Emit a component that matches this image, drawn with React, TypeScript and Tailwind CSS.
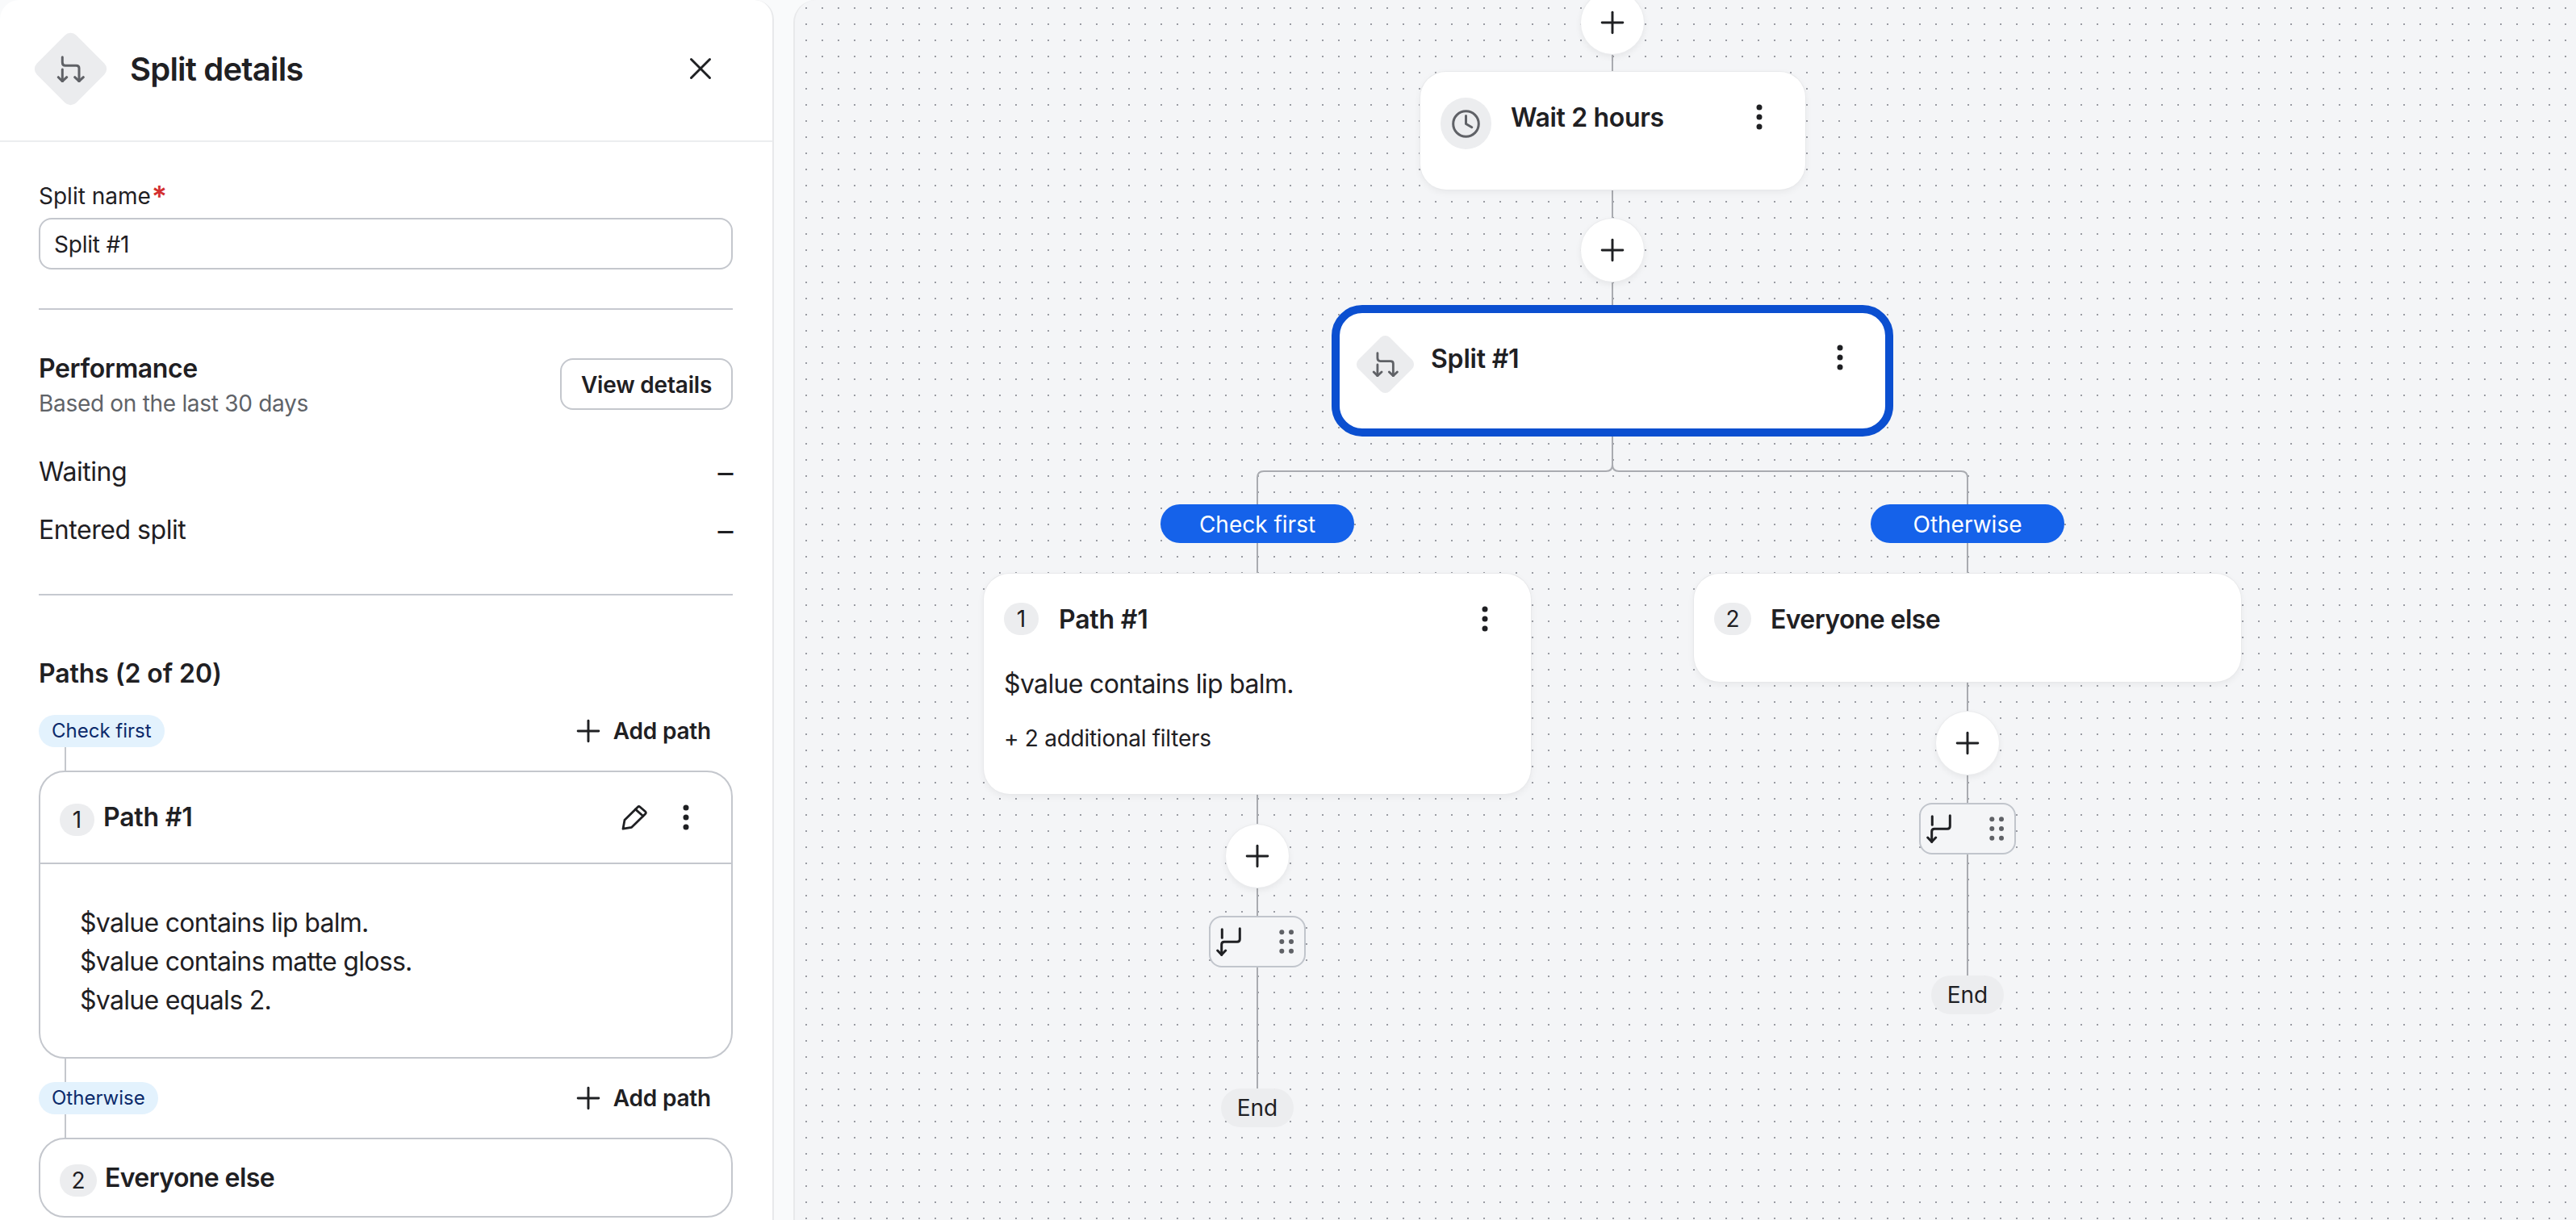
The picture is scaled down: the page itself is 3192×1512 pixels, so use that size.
import { X, Plus } from 'lucide-react';

const textFont = "font-['Inter','Liberation_Sans',sans-serif]";

function SplitIcon({ className }: { className: string }) {
  return (
    <svg className={className} viewBox="0 0 35 33" fill="none" stroke="#5f6166" strokeWidth="3" strokeLinecap="round" strokeLinejoin="round">
      <path d="M7.3 1.7V8.3Q7.3 12.3 11 12.3H24.5Q28 12.3 28 15.5V31.7" />
      <path d="M22.7 26.7L28 31.7L33.3 26.7" />
      <path d="M7.3 17V31.7" />
      <path d="M2.3 26.7L7.3 31.7L12.7 26.7" />
    </svg>
  );
}

function ReturnIcon() {
  return (
    <svg className="w-[32px] h-[37px]" viewBox="0 0 32 37" fill="none" stroke="#1f2023" strokeWidth="3" strokeLinecap="round" strokeLinejoin="round">
      <path d="M7.3 2.7V13.3" />
      <path d="M29.3 1.7V15Q29.3 18.3 26 18.3H10Q6.7 18.3 6.7 21.7V34.3" />
      <path d="M1.7 29L6.7 34.3L11.7 29" />
    </svg>
  );
}

function DragDots() {
  return (
    <svg className="w-[18px] h-[30px]" viewBox="0 0 18 30" fill="#5f6166">
      <circle cx="3.3" cy="3.3" r="3" />
      <circle cx="15" cy="3.3" r="3" />
      <circle cx="3.3" cy="15" r="3" />
      <circle cx="15" cy="15" r="3" />
      <circle cx="3.3" cy="26.7" r="3" />
      <circle cx="15" cy="26.7" r="3" />
    </svg>
  );
}

function MoreDots({ className = '' }: { className?: string }) {
  return (
    <svg className={`w-[8px] h-[32px] ${className}`} viewBox="0 0 8 32" fill="#1f2023">
      <circle cx="4" cy="4" r="3.5" />
      <circle cx="4" cy="16" r="3.5" />
      <circle cx="4" cy="28" r="3.5" />
    </svg>
  );
}

function PencilIcon() {
  return (
    <svg className="w-[32px] h-[32px]" viewBox="0 0 32 32" fill="none" stroke="#1f2023" strokeWidth="2.8" strokeLinecap="round" strokeLinejoin="round">
      <path d="M2 30.2L4 19.3L20 3.4Q21.6 1.8 23.2 3.2L29.6 8.8Q31.2 10.2 29.6 11.8L12.7 28.3Z" />
      <path d="M17.3 5.9L26.7 14.3" />
    </svg>
  );
}

function ClockIcon() {
  return (
    <svg className="w-[35px] h-[35px]" viewBox="0 0 35 35" fill="none" stroke="#5f6166" strokeWidth="3" strokeLinecap="round" strokeLinejoin="round">
      <circle cx="17.5" cy="17.5" r="15.8" />
      <path d="M17.5 7.5V17.5L24.8 21.8" />
    </svg>
  );
}

function AddButton({ className }: { className: string }) {
  return (
    <div className={`absolute flex h-[78px] w-[78px] items-center justify-center rounded-full bg-white shadow-[0_0_0_1px_#ebecee,0_3px_8px_rgba(0,0,0,0.07)] ${className}`}>
      <Plus className="h-[44px] w-[44px] text-[#1f2023]" strokeWidth={1.6} />
    </div>
  );
}

function Handle({ className }: { className: string }) {
  return (
    <div className={`absolute flex h-[64px] w-[120px] items-center justify-between rounded-[16px] border-2 border-[#c1c5cc] bg-[#f4f5f7] pl-[7px] pr-[13px] ${className}`}>
      <ReturnIcon />
      <DragDots />
    </div>
  );
}

function EndPill({ className }: { className: string }) {
  return (
    <div className={`absolute flex h-[48px] w-[90px] items-center justify-center rounded-full bg-[#ecedef] text-[28px] text-[#1f2023] ${className}`}>
      End
    </div>
  );
}

function BranchPill({ className, label }: { className: string; label: string }) {
  return (
    <div className={`absolute flex h-[48px] w-[240px] items-center justify-center rounded-full bg-[#1562ea] pt-[2px] text-[28px] text-white ${className}`}>
      {label}
    </div>
  );
}

function Badge({ value, width }: { value: string; width: string }) {
  return (
    <div className={`flex h-[40px] shrink-0 items-center justify-center rounded-full bg-[#ecedef] text-[28px] text-[#1f2023] ${width}`}>
      {value}
    </div>
  );
}

function PathHeader({ label }: { label: string }) {
  return (
    <div className="flex h-[40px] items-center justify-between">
      <div className="flex h-[40px] items-center rounded-full bg-[#e3f2fd] px-[16px] text-[24px] text-[#0b2a6b]">{label}</div>
      <div className="flex h-[40px] items-center gap-[18px] pr-[27px] text-[28px] font-semibold tracking-[-0.2px] text-[#1f2023]">
        <Plus className="-mx-[9px] h-[44px] w-[44px]" strokeWidth={1.6} />
        <span>Add path</span>
      </div>
    </div>
  );
}

function Stem() {
  return <div className="ml-[32px] h-[29px] w-[2px] bg-[#c4c7cd]" />;
}

function Panel() {
  return (
    <div className="h-full w-[959px] shrink-0 overflow-hidden rounded-tl-[24px] rounded-tr-[24px] border-r-2 border-[#e8e9eb] bg-white">
      <div className="flex h-[176px] items-center border-b-2 border-[#ecedef] pb-[4px] pl-[43px] pr-[66px]">
        <div className="relative flex h-[89px] w-[89px] items-center justify-center">
          <div className="absolute h-[69px] w-[69px] rotate-45 rounded-[10px] bg-[#ebecee]" />
          <SplitIcon className="relative h-[33px] w-[35px]" />
        </div>
        <div className="ml-[29px] mt-[2px] text-[40px] font-semibold tracking-[-0.8px] text-[#1f2023]">Split details</div>
        <X className="ml-auto h-[46px] w-[46px] text-[#1f2023]" strokeWidth={1.56} />
      </div>

      <div className="pl-[48px] pr-[49px] pt-[48px]">
        <div className="flex h-[36px] items-center pt-[2px] text-[28px] text-[#1f2023]">
          Split name
          <span className="ml-[1px] text-[36px] font-semibold leading-[36px] text-[#d32f2f]">*</span>
        </div>
        <input
          readOnly
          value="Split #1"
          className="mt-[10px] block h-[64px] w-full rounded-[16px] border-2 border-[#c4c7cd] bg-white px-[17px] pt-[2px] text-[28px] tracking-[-0.2px] text-[#1f2023] outline-none"
        />
        <div className="mt-[48px] h-[2px] bg-[#c6c9d0]" />

        <div className="mt-[53px] flex items-start justify-between">
          <div>
            <div className="text-[32px] font-semibold leading-[40px] tracking-[-0.4px] text-[#1f2023]">Performance</div>
            <div className="mt-[5px] text-[28px] leading-[36px] tracking-[-0.3px] text-[#5f6368]">Based on the last 30 days</div>
          </div>
          <div className="mt-[7px] flex h-[64px] w-[214px] items-center justify-center rounded-[16px] border-2 border-[#c4c7cd] pt-[2px] text-[28px] font-semibold tracking-[-0.2px] text-[#1f2023]">
            View details
          </div>
        </div>

        <div className="mt-[31px] flex h-[72px] items-center justify-between text-[32px] tracking-[-0.45px] text-[#1f2023]">
          <span>Waiting</span>
          <span className="text-[38px]">–</span>
        </div>
        <div className="flex h-[72px] items-center justify-between text-[32px] tracking-[-0.45px] text-[#1f2023]">
          <span>Entered split</span>
          <span className="text-[38px]">–</span>
        </div>
        <div className="mt-[43px] h-[2px] bg-[#c6c9d0]" />

        <div className="mt-[77px] text-[32px] font-semibold leading-[40px] tracking-[-0.1px] text-[#1f2023]">Paths (2 of 20)</div>
        <div className="mt-[31px]">
          <PathHeader label="Check first" />
        </div>
        <Stem />
        <div className="h-[357px] rounded-[32px] border-2 border-[#c4c7cd]">
          <div className="flex h-[114px] items-center border-b-2 border-[#c4c7cd] pl-[24px] pr-[52px]">
            <div className="mt-[6px]">
              <Badge value="1" width="w-[43px]" />
            </div>
            <span className="ml-[11px] text-[32px] font-semibold tracking-[-0.2px] text-[#1f2023]">Path #1</span>
            <div className="ml-auto flex items-center gap-[44px]">
              <PencilIcon />
              <MoreDots />
            </div>
          </div>
          <div className="pl-[49px] pt-[49px] text-[32px] leading-[48px] tracking-[-0.7px] text-[#1f2023]">
            <div>$value contains lip balm.</div>
            <div>$value contains matte gloss.</div>
            <div>$value equals 2.</div>
          </div>
        </div>
        <Stem />
        <PathHeader label="Otherwise" />
        <Stem />
        <div className="flex h-[99px] items-center rounded-[32px] border-2 border-[#c4c7cd] pl-[24px]">
          <div className="mt-[6px]">
            <Badge value="2" width="w-[46px]" />
          </div>
          <span className="ml-[10px] text-[32px] font-semibold tracking-[-0.6px] text-[#1f2023]">Everyone else</span>
        </div>
      </div>
    </div>
  );
}

function Canvas() {
  return (
    <div className="relative ml-[24px] h-full flex-1 overflow-hidden rounded-tl-[28px] border-l-2 border-[#e8e9eb] bg-[#f4f5f7] bg-[radial-gradient(circle,#9a9ca3_1px,transparent_1.2px)] bg-[length:20px_20px] bg-[position:4px_0px]">
      <svg className="absolute left-0 top-0 h-[1512px] w-[2207px]" viewBox="0 0 2207 1512" fill="none" stroke="#a9abb0" strokeWidth="2">
        <path d="M1013 0V378" />
        <path d="M1013 541V576Q1013 584 1005 584H581Q573 584 573 592V1349" />
        <path d="M1013 541V576Q1013 584 1021 584H1445Q1453 584 1453 592V1209" />
      </svg>

      <AddButton className="left-[974px] top-[-11px]" />

      <div className="absolute left-[775px] top-[89px] flex h-[146px] w-[477px] items-start rounded-[32px] bg-white pl-[25px] pr-[53px] pt-[25px] shadow-[0_0_0_1px_#e8e9eb,0_3px_10px_rgba(0,0,0,0.06)]">
        <div className="mt-[7px] flex h-[64px] w-[63px] items-center justify-center rounded-full bg-[#ecedef]">
          <ClockIcon />
        </div>
        <div className="ml-[24px] mt-[12px] text-[32px] font-semibold leading-[40px] tracking-[-0.35px] text-[#1f2023]">Wait 2 hours</div>
        <MoreDots className="ml-auto mt-[15px]" />
      </div>

      <AddButton className="left-[974px] top-[271px]" />

      <div className="absolute left-[665px] top-[378px] flex h-[163px] w-[696px] items-start rounded-[38px] border-[10px] border-[#0b4fd0] bg-white pl-[21px] pr-[52px] pt-[28px]">
        <div className="relative flex h-[71px] w-[71px] shrink-0 items-center justify-center">
          <div className="absolute h-[55px] w-[55px] rotate-45 rounded-[8px] bg-[#ebecee]" />
          <SplitIcon className="relative h-[31px] w-[33px]" />
        </div>
        <div className="ml-[21px] mt-[9px] text-[32px] font-semibold leading-[40px] tracking-[-0.2px] text-[#1f2023]">Split #1</div>
        <MoreDots className="ml-auto mt-[11px]" />
      </div>

      <BranchPill className="left-[453px] top-[625px]" label="Check first" />
      <BranchPill className="left-[1333px] top-[625px]" label="Otherwise" />

      <div className="absolute left-[234px] top-[711px] h-[273px] w-[678px] rounded-[32px] bg-white pl-[25px] pr-[53px] pt-[36px] shadow-[0_0_0_1px_#e8e9eb,0_3px_10px_rgba(0,0,0,0.06)]">
        <div className="flex h-[40px] items-center">
          <Badge value="1" width="w-[43px]" />
          <span className="ml-[25px] mt-[2px] text-[32px] font-semibold tracking-[-0.2px] text-[#1f2023]">Path #1</span>
          <MoreDots className="ml-auto" />
        </div>
        <div className="mt-[37px] text-[32px] leading-[48px] tracking-[-0.65px] text-[#1f2023]">$value contains lip balm.</div>
        <div className="mt-[25px] text-[28px] leading-[36px] tracking-[-0.27px] text-[#1f2023]">+ 2 additional filters</div>
      </div>

      <div className="absolute left-[1114px] top-[711px] h-[134px] w-[678px] rounded-[32px] bg-white pl-[25px] pt-[36px] shadow-[0_0_0_1px_#e8e9eb,0_3px_10px_rgba(0,0,0,0.06)]">
        <div className="flex h-[40px] items-center">
          <Badge value="2" width="w-[46px]" />
          <span className="ml-[24px] mt-[2px] text-[32px] font-semibold tracking-[-0.6px] text-[#1f2023]">Everyone else</span>
        </div>
      </div>

      <AddButton className="left-[534px] top-[1022px]" />
      <AddButton className="left-[1414px] top-[882px]" />
      <Handle className="left-[513px] top-[1135px]" />
      <Handle className="left-[1393px] top-[995px]" />
      <EndPill className="left-[528px] top-[1349px]" />
      <EndPill className="left-[1408px] top-[1209px]" />
    </div>
  );
}

export default function App() {
  return (
    <div className={`flex h-[1512px] w-[3192px] overflow-hidden bg-[#f9fafb] ${textFont}`}>
      <Panel />
      <Canvas />
    </div>
  );
}
